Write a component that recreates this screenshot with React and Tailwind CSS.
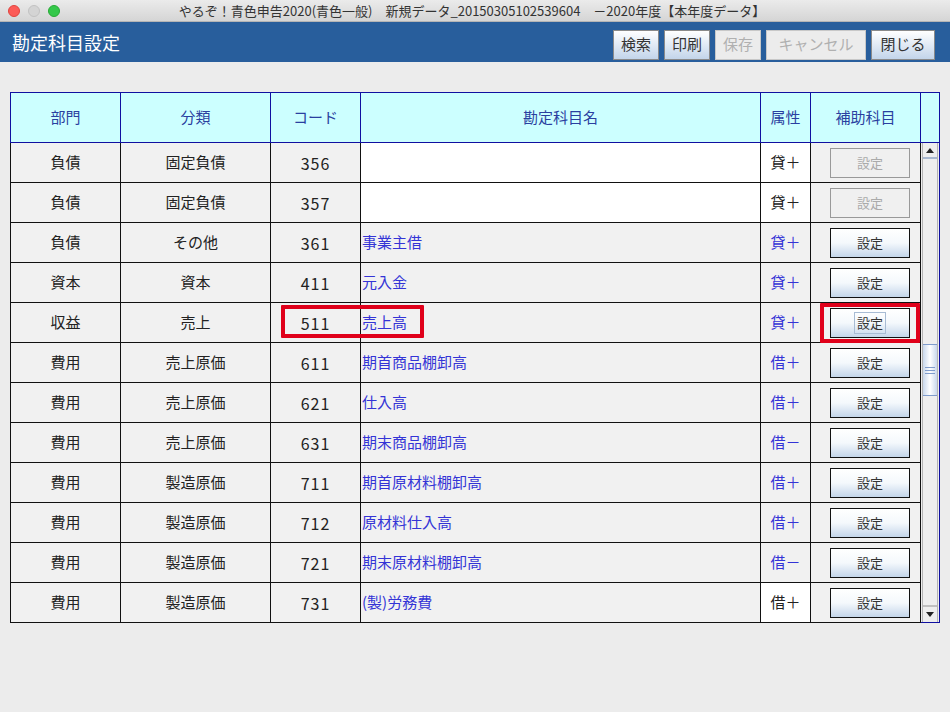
import { useState } from 'react'

const ROWS = [
  { dept: '負債', cat: '固定負債', code: '356', name: '', attr: '貸＋', custom: false, sub: false },
  { dept: '負債', cat: '固定負債', code: '357', name: '', attr: '貸＋', custom: false, sub: false },
  { dept: '負債', cat: 'その他', code: '361', name: '事業主借', attr: '貸＋', custom: true, sub: true },
  { dept: '資本', cat: '資本', code: '411', name: '元入金', attr: '貸＋', custom: true, sub: true },
  { dept: '収益', cat: '売上', code: '511', name: '売上高', attr: '貸＋', custom: true, sub: true, focus: true },
  { dept: '費用', cat: '売上原価', code: '611', name: '期首商品棚卸高', attr: '借＋', custom: true, sub: true },
  { dept: '費用', cat: '売上原価', code: '621', name: '仕入高', attr: '借＋', custom: true, sub: true },
  { dept: '費用', cat: '売上原価', code: '631', name: '期末商品棚卸高', attr: '借－', custom: true, sub: true },
  { dept: '費用', cat: '製造原価', code: '711', name: '期首原材料棚卸高', attr: '借＋', custom: true, sub: true },
  { dept: '費用', cat: '製造原価', code: '712', name: '原材料仕入高', attr: '借＋', custom: true, sub: true },
  { dept: '費用', cat: '製造原価', code: '721', name: '期末原材料棚卸高', attr: '借－', custom: true, sub: true },
  { dept: '費用', cat: '製造原価', code: '731', name: '(製)労務費', attr: '借＋', custom: false, nameBlue: true, sub: true },
]

const HEADERS = [
  { label: '部門', w: 'w-[110px]' },
  { label: '分類', w: 'w-[150px]' },
  { label: 'コード', w: 'w-[90px]' },
  { label: '勘定科目名', w: 'w-[400px]' },
  { label: '属性', w: 'w-[50px]' },
  { label: '補助科目', w: 'w-[110px]' },
]

function ToolButton({ label, width, disabled }) {
  return (
    <button
      className={
        'h-[30px] flex items-center justify-center text-[15px] border ' +
        width +
        (disabled
          ? ' bg-[#ececec] border-[#c8c8c8] text-[#b0b0b0]'
          : ' bg-gradient-to-b from-white to-[#c3d5ea] border-[#8a8a8a] text-[#333]')
      }
    >
      {label}
    </button>
  )
}

function SetButton({ disabled, focus }) {
  if (disabled) {
    return (
      <div className="w-[80px] h-[30px] flex items-center justify-center border border-[#999] bg-[#f0f0f0] text-[13px] text-[#aaa]">
        設定
      </div>
    )
  }
  return (
    <div className="w-[80px] h-[30px] flex items-center justify-center border border-[#111] bg-gradient-to-b from-white via-[#f4f8fc] to-[#c4d6ea] text-[13px] text-[#333]">
      <span className={focus ? 'px-[2px] border border-[#a8bcd4] leading-[20px]' : 'leading-[20px]'}>設定</span>
    </div>
  )
}

function Scrollbar() {
  return (
    <div className="w-[19px] border-r border-b border-[#1010a0] bg-[#eeeeee] flex flex-col px-[1px]">
      <div className="flex-1 flex flex-col border-x border-[#b4b4b4] bg-[#eeeeee]">
        <div className="h-[16px] border-b-2 border-[#a8b8d0] flex items-center justify-center">
          <div className="w-0 h-0 border-x-[4px] border-x-transparent border-b-[5px] border-b-[#222]" />
        </div>
        <div className="h-[185px]" />
        <div className="h-[52px] border-y border-[#7f9ccc] bg-gradient-to-r from-[#c9d8ec] via-white to-[#c9d8ec] flex flex-col items-center justify-center gap-[2px]">
          <div className="w-[10px] h-px bg-[#7f9ccc]" />
          <div className="w-[10px] h-px bg-[#7f9ccc]" />
          <div className="w-[10px] h-px bg-[#7f9ccc]" />
        </div>
        <div className="flex-1" />
        <div className="h-[17px] border-t-2 border-[#c0c0c0] flex items-center justify-center">
          <div className="w-0 h-0 border-x-[4px] border-x-transparent border-t-[5px] border-t-[#222]" />
        </div>
      </div>
    </div>
  )
}

export default function App() {
  const [rows] = useState(ROWS)

  return (
    <div className="w-[950px] h-[712px] bg-[#ececec] font-['Noto_Sans_CJK_JP','Noto_Sans',sans-serif] overflow-hidden relative">
      {/* Title bar */}
      <div className="h-[22px] bg-gradient-to-b from-[#ebebeb] to-[#d5d5d5] border-b border-[#b5b5b5] flex items-center relative">
        <div className="flex items-center gap-[8px] pl-[8px]">
          <div className="w-[12px] h-[12px] rounded-full bg-[#fc5b57] border border-[#e0443e]" />
          <div className="w-[12px] h-[12px] rounded-full bg-[#d4d4d4] border border-[#c2c2c2]" />
          <div className="w-[12px] h-[12px] rounded-full bg-[#34c84a] border border-[#27aa35]" />
        </div>
        <div className="flex-1 text-center text-[13px] text-[#333] leading-none pr-[66px] whitespace-nowrap">
          やるぞ！青色申告2020(青色一般)　新規データ_20150305102539604　－2020年度【本年度データ】
        </div>
      </div>

      {/* Header */}
      <div className="h-[40px] bg-[#285e9c] flex items-center justify-between pl-[12px] pr-[15px]">
        <div className="text-white text-[18px] leading-none">勘定科目設定</div>
        <div className="flex items-center gap-[5px] pt-[5px]">
          <ToolButton label="検索" width="w-[46px]" />
          <ToolButton label="印刷" width="w-[46px]" />
          <ToolButton label="保存" width="w-[46px]" disabled />
          <ToolButton label="キャンセル" width="w-[100px]" disabled />
          <ToolButton label="閉じる" width="w-[64px]" />
        </div>
      </div>

      {/* Table */}
      <div className="mt-[30px] ml-[10px] w-[930px]">
        <div className="flex h-[51px] border border-[#1010a0] bg-[#ccffff]">
          {HEADERS.map(h => (
            <div
              key={h.label}
              className={h.w + ' border-r border-[#1010a0] flex items-center justify-center text-[15px] text-[#2a3fa0]'}
            >
              {h.label}
            </div>
          ))}
          <div className="flex-1" />
        </div>

        <div className="flex">
          <div className="w-[911px] border-l border-[#111]">
            {rows.map(r => (
              <div key={r.code} className="flex h-[40px] border-b border-[#111] bg-[#f1f1f1] text-[15px] text-[#222]">
                <div className="w-[110px] border-r border-[#111] flex items-center justify-center">{r.dept}</div>
                <div className="w-[150px] border-r border-[#111] flex items-center justify-center">{r.cat}</div>
                <div className="w-[90px] border-r border-[#111] flex items-center justify-center text-[16px] tracking-[1px]">{r.code}</div>
                <div
                  className={
                    'w-[400px] border-r border-[#111] flex items-center pl-[1px] ' +
                    (r.name ? 'text-[#3434d6]' : 'bg-white')
                  }
                >
                  {r.name}
                </div>
                <div
                  className={
                    'w-[50px] border-r border-[#111] flex items-center justify-center ' +
                    (r.custom ? 'text-[#3434d6]' : 'bg-white text-[#222]')
                  }
                >
                  {r.attr}
                </div>
                <div className="w-[110px] border-r border-[#111] flex items-center pl-[19px]">
                  <SetButton disabled={!r.sub} focus={r.focus} />
                </div>
              </div>
            ))}
          </div>
          <Scrollbar />
        </div>
      </div>

      {/* Red highlight boxes */}
      <div className="absolute left-[281px] top-[305px] w-[143px] h-[33px] border-4 border-[#e0001a] rounded-[1px]" />
      <div className="absolute left-[820px] top-[303px] w-[100px] h-[40px] border-4 border-[#e0001a] rounded-[1px]" />
    </div>
  )
}
